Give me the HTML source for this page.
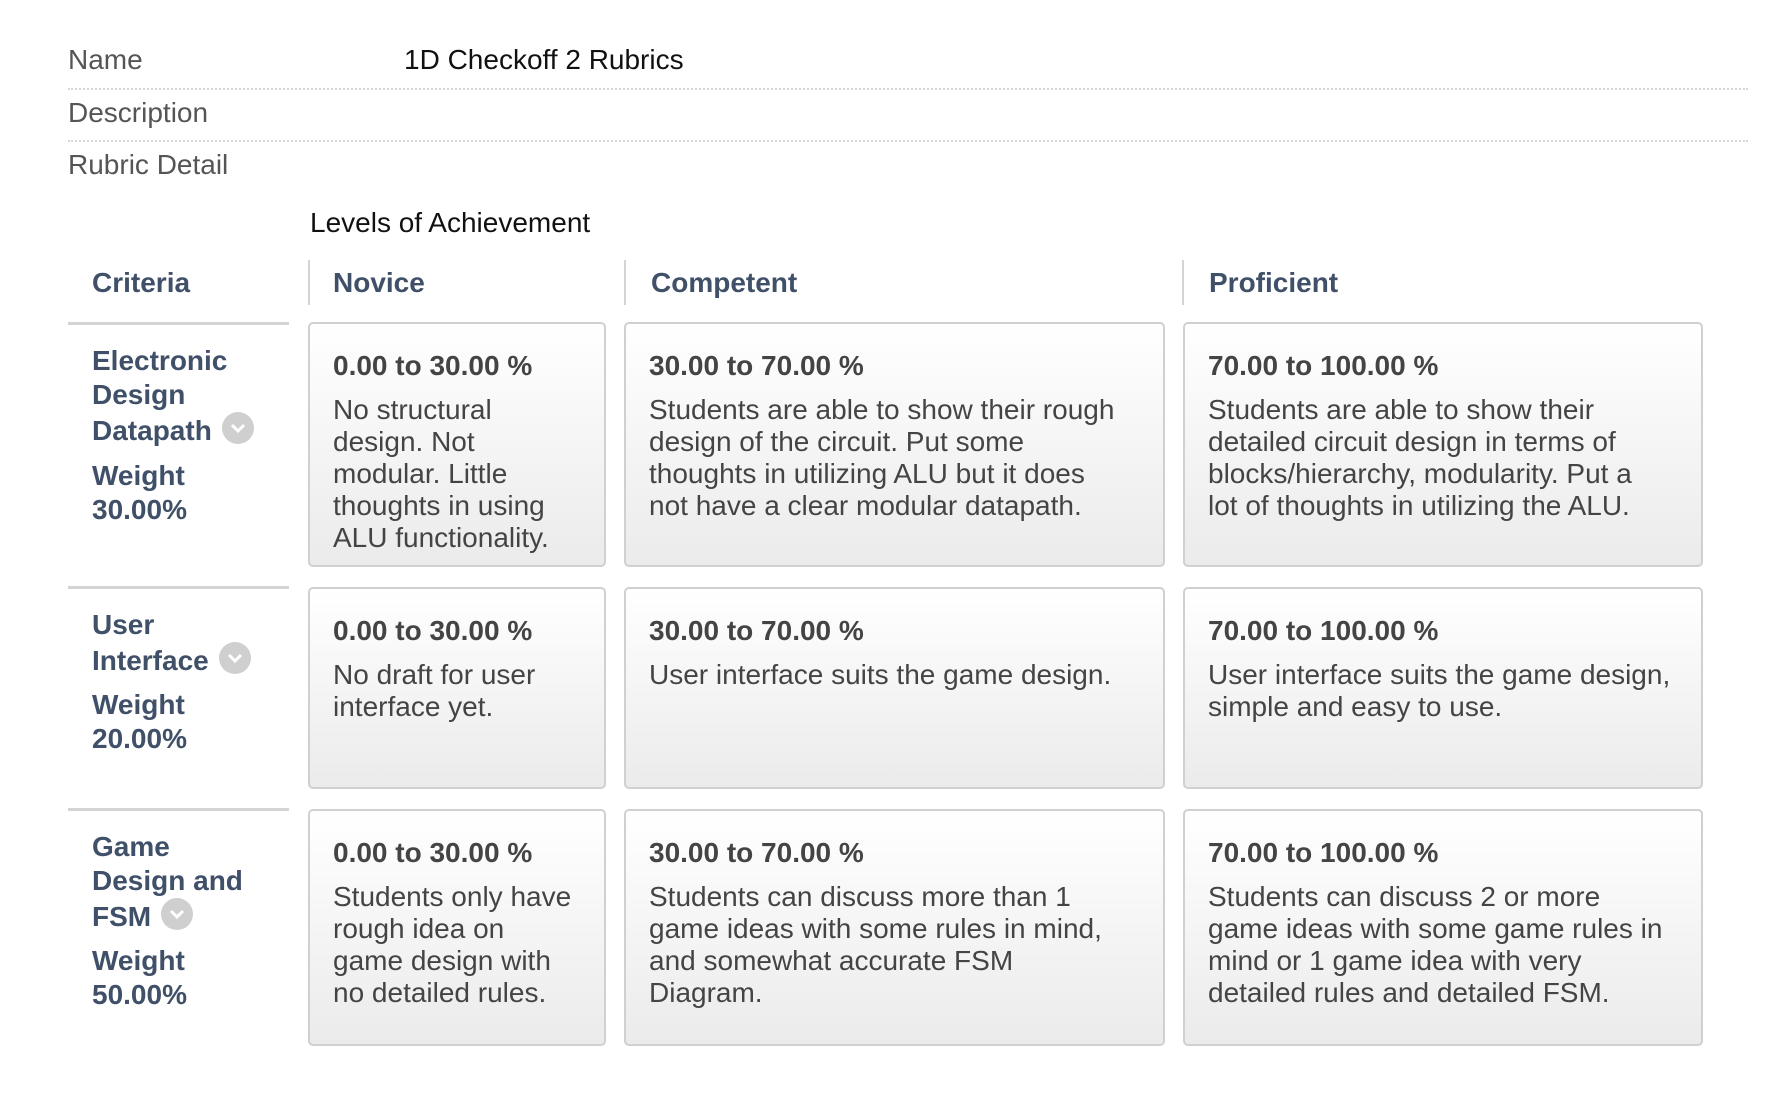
<!DOCTYPE html>
<html><head><meta charset="utf-8"><style>
body{margin:0;width:1776px;height:1120px;background:#fff;font-family:"Liberation Sans",Arial,sans-serif;position:relative;overflow:hidden}
.a{position:absolute;white-space:nowrap}
.lbl{font-size:28px;color:#555}
.dot{position:absolute;left:68px;width:1680px;border-top:2px dotted #d6d6d6;height:0}
.hd{font-size:28px;font-weight:bold;color:#3f5068}
.vs{position:absolute;width:2px;background:#d4d4d4;top:260px;height:45px}
.cr{position:absolute;left:68px;width:221px;border-top:3px solid #d4d4d4}
.ct{position:absolute;left:92px;font-size:28px;font-weight:bold;color:#3f5068;line-height:34px}
.box{position:absolute;box-sizing:border-box;border:2px solid #d0d0d0;border-radius:5px;background:linear-gradient(#fff,#ebebeb);padding:25px 20px 0 23px;color:#444;white-space:nowrap}
.box b{display:block;font-size:28px;line-height:34px;margin-bottom:11px;color:#444}
.box p{margin:0;font-size:28px;line-height:32px}
.ic{display:inline-block;width:32px;height:32px;border-radius:50%;background:#cfcfcf;vertical-align:-4px;margin-left:10px;position:relative}
.ic svg{position:absolute;left:0;top:0}
</style></head><body>
<div class="a lbl" style="left:68px;top:44px">Name</div>
<div class="a" style="left:404px;top:44px;font-size:28px;color:#111">1D Checkoff 2 Rubrics</div>
<div class="dot" style="top:88px"></div>
<div class="a lbl" style="left:68px;top:97px">Description</div>
<div class="dot" style="top:140px"></div>
<div class="a lbl" style="left:68px;top:149px">Rubric Detail</div>
<div class="a" style="left:310px;top:207px;font-size:28px;color:#111">Levels of Achievement</div>
<div class="a hd" style="left:92px;top:267px">Criteria</div>
<div class="vs" style="left:308px"></div><div class="a hd" style="left:333px;top:267px">Novice</div>
<div class="vs" style="left:624px"></div><div class="a hd" style="left:651px;top:267px">Competent</div>
<div class="vs" style="left:1182px"></div><div class="a hd" style="left:1209px;top:267px">Proficient</div>

<div class="cr" style="top:322px"></div>
<div class="ct" style="top:344px">Electronic<br>Design<br>Datapath<span class="ic"><svg width="32" height="32"><path d="M10 13l6 6 6-6" stroke="#fff" stroke-width="3" fill="none"/></svg></span></div>
<div class="ct" style="top:459px">Weight<br>30.00%</div>
<div class="box" style="left:308px;top:322px;width:298px;height:245px"><b>0.00 to 30.00 %</b><p>No structural<br>design. Not<br>modular. Little<br>thoughts in using<br>ALU functionality.</p></div>
<div class="box" style="left:624px;top:322px;width:541px;height:245px"><b>30.00 to 70.00 %</b><p>Students are able to show their rough<br>design of the circuit. Put some<br>thoughts in utilizing ALU but it does<br>not have a clear modular datapath.</p></div>
<div class="box" style="left:1183px;top:322px;width:520px;height:245px"><b>70.00 to 100.00 %</b><p>Students are able to show their<br>detailed circuit design in terms of<br>blocks/hierarchy, modularity. Put a<br>lot of thoughts in utilizing the ALU.</p></div>

<div class="cr" style="top:586px"></div>
<div class="ct" style="top:608px">User<br>Interface<span class="ic"><svg width="32" height="32"><path d="M10 13l6 6 6-6" stroke="#fff" stroke-width="3" fill="none"/></svg></span></div>
<div class="ct" style="top:688px">Weight<br>20.00%</div>
<div class="box" style="left:308px;top:587px;width:298px;height:202px"><b>0.00 to 30.00 %</b><p>No draft for user<br>interface yet.</p></div>
<div class="box" style="left:624px;top:587px;width:541px;height:202px"><b>30.00 to 70.00 %</b><p>User interface suits the game design.</p></div>
<div class="box" style="left:1183px;top:587px;width:520px;height:202px"><b>70.00 to 100.00 %</b><p>User interface suits the game design,<br>simple and easy to use.</p></div>

<div class="cr" style="top:808px"></div>
<div class="ct" style="top:830px">Game<br>Design and<br>FSM<span class="ic"><svg width="32" height="32"><path d="M10 13l6 6 6-6" stroke="#fff" stroke-width="3" fill="none"/></svg></span></div>
<div class="ct" style="top:944px">Weight<br>50.00%</div>
<div class="box" style="left:308px;top:809px;width:298px;height:237px"><b>0.00 to 30.00 %</b><p>Students only have<br>rough idea on<br>game design with<br>no detailed rules.</p></div>
<div class="box" style="left:624px;top:809px;width:541px;height:237px"><b>30.00 to 70.00 %</b><p>Students can discuss more than 1<br>game ideas with some rules in mind,<br>and somewhat accurate FSM<br>Diagram.</p></div>
<div class="box" style="left:1183px;top:809px;width:520px;height:237px"><b>70.00 to 100.00 %</b><p>Students can discuss 2 or more<br>game ideas with some game rules in<br>mind or 1 game idea with very<br>detailed rules and detailed FSM.</p></div>
</body></html>
